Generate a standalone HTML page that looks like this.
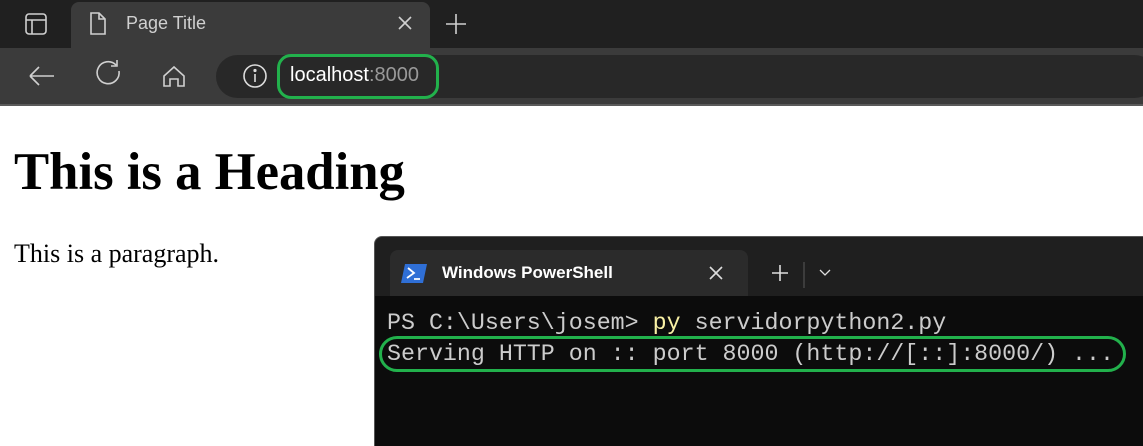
<!DOCTYPE html>
<html><head><style>
*{margin:0;padding:0;box-sizing:border-box}
body{width:1143px;height:441px;overflow:hidden;background:#fff;position:relative;font-family:"Liberation Sans",sans-serif}
.a{position:absolute}
</style></head><body>
<div class="a" style="left:0;top:0;width:1143px;height:48px;background:#202020"></div>
<div class="a" style="left:71px;top:2px;width:359px;height:46px;background:#3b3b3b;border-radius:8px 8px 0 0"></div>
<div class="a" style="left:0;top:48px;width:1143px;height:56px;background:#3b3b3b"></div>
<div class="a" style="left:0;top:104px;width:1143px;height:2px;background:#5a5a5a"></div>
<svg class="a" style="left:0;top:0" width="1143" height="106" fill="none" stroke="#d0d0d0" stroke-width="1.6">
<rect x="26" y="14" width="20" height="20" rx="3"/><line x1="26" y1="20" x2="46" y2="20"/><line x1="32" y1="20" x2="32" y2="34"/>
<path d="M91 13h8l6 6v15h-14z M99 13v6h6"/>
<path d="M399 17l12 12M411 17l-12 12"/>
<path d="M456 14v20M446 24h20"/>
<path d="M30 76h24M30 76l9-9M30 76l9 9"/>
<path d="M119 71a11 11 0 1 1-3-6M117 60v6h-6"/>
<path d="M164 86v-10l10-9 10 9v10h-6v-7h-8v7z"/>
</svg>
<div class="a" style="left:216px;top:55px;width:940px;height:43px;background:#282828;border-radius:22px"></div>
<svg class="a" style="left:242px;top:63px" width="28" height="28" fill="none" stroke="#ddd" stroke-width="1.6"><circle cx="13" cy="13" r="11"/><line x1="13" y1="11" x2="13" y2="19"/><circle cx="13" cy="7.5" r="0.8" fill="#ddd"/></svg>
<div class="a" style="left:126px;top:13px;font-size:18px;color:#d0d0d0">Page Title</div>
<div class="a" style="left:290px;top:64px;font-size:20px;color:#fff">localhost<span style="color:#999">:8000</span></div>
<div class="a" style="left:277px;top:54px;width:162px;height:45px;border:3px solid #22b14c;border-radius:14px"></div>
<div class="a" style="left:14px;top:142px;font-family:'Liberation Serif',serif;font-size:52.7px;font-weight:bold;color:#000">This is a Heading</div>
<div class="a" style="left:14px;top:239px;font-family:'Liberation Serif',serif;font-size:26px;color:#000">This is a paragraph.</div>
<div class="a" style="left:374px;top:236px;width:780px;height:210px;background:#1f1f1f;border-radius:8px 0 0 0;border:1px solid #555"></div>
<div class="a" style="left:390px;top:250px;width:358px;height:46px;background:#2b2b2b;border-radius:8px 8px 0 0"></div>
<div class="a" style="left:375px;top:296px;width:770px;height:150px;background:#0c0c0c"></div>
<svg class="a" style="left:400px;top:262px" width="30" height="24"><polygon points="5,2 27,2 23,21 1,21" fill="#2f6fd6"/><path d="M8 6l6 5-7 5M14 17h6" stroke="#fff" stroke-width="1.8" fill="none"/></svg>
<div class="a" style="left:442px;top:263px;font-size:17px;font-weight:bold;color:#fff">Windows PowerShell</div>
<svg class="a" style="left:700px;top:260px" width="140" height="30" fill="none" stroke="#ddd" stroke-width="1.6"><path d="M10 7l12 12M22 7l-12 12"/><path d="M80 5v16M72 13h16"/><line x1="104" y1="2" x2="104" y2="28" stroke="#444"/><path d="M120 10l5 5 5-5" stroke-width="1.3"/></svg>
<div class="a" style="left:387px;top:308px;font-family:'Liberation Mono','DejaVu Sans Mono',monospace;font-size:23.3px;color:#ccc;white-space:pre;line-height:31px">PS C:\Users\josem&gt; <span style="color:#f9f1a5">py</span> servidorpython2.py
Serving HTTP on :: port 8000 (http://[::]:8000/) ...</div>
<div class="a" style="left:379px;top:336px;width:747px;height:36px;border:3px solid #22b14c;border-radius:18px"></div>
</body></html>
